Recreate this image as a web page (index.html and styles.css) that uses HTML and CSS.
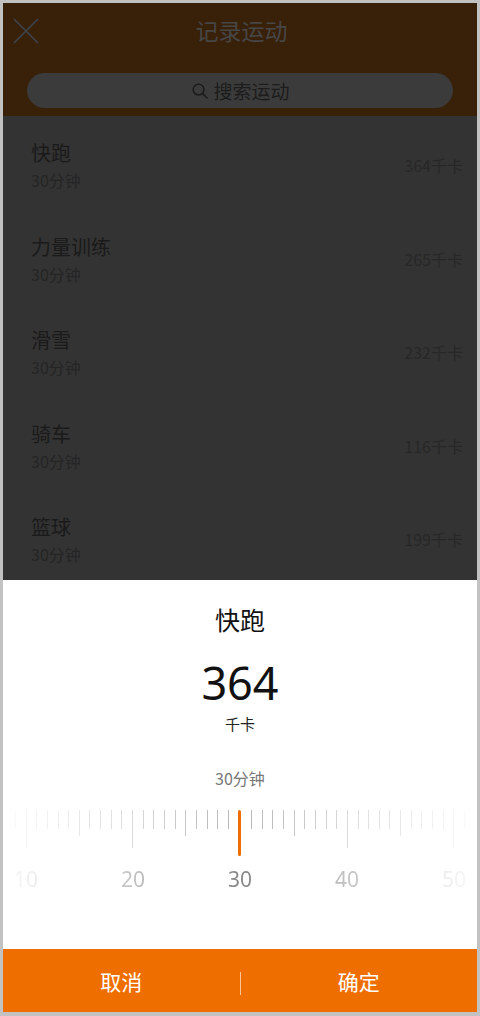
FILE: index.html
```html
<!DOCTYPE html>
<html lang="zh-CN">
<head>
    <meta charset="UTF-8">
    <meta name="viewport" content="width=device-width, initial-scale=1.0">
    <title>记录运动</title>
    <link rel="stylesheet" href="styles.css">
</head>
<body>
    <div class="app">
        <!-- Header (dimmed behind the sheet) -->
        <div class="top-bar">
            <div class="title-row">
                <svg class="close-icon" width="26" height="26" viewBox="0 0 26 26">
                    <path d="M1 1 L25 25 M25 1 L1 25" stroke="#3c444d" stroke-width="1.6" fill="none"/>
                </svg>
                <h1 class="page-title">记录运动</h1>
            </div>
            <div class="search-box">
                <svg class="search-icon" width="16" height="16" viewBox="0 0 16 16">
                    <circle cx="6.6" cy="6.6" r="5.4" stroke="#1c1c1c" stroke-width="1.6" fill="none"/>
                    <path d="M10.6 10.6 L15 15" stroke="#1c1c1c" stroke-width="1.6" stroke-linecap="round"/>
                </svg>
                <span>搜索运动</span>
            </div>
        </div>

        <div class="sport-list">
            <div class="sport-row">
                <div class="sport-info">
                    <div class="sport-name">快跑</div>
                    <div class="sport-time">30分钟</div>
                </div>
                <div class="sport-kcal">364千卡</div>
            </div>
            <div class="sport-row">
                <div class="sport-info">
                    <div class="sport-name">力量训练</div>
                    <div class="sport-time">30分钟</div>
                </div>
                <div class="sport-kcal">265千卡</div>
            </div>
            <div class="sport-row">
                <div class="sport-info">
                    <div class="sport-name">滑雪</div>
                    <div class="sport-time">30分钟</div>
                </div>
                <div class="sport-kcal">232千卡</div>
            </div>
            <div class="sport-row">
                <div class="sport-info">
                    <div class="sport-name">骑车</div>
                    <div class="sport-time">30分钟</div>
                </div>
                <div class="sport-kcal">116千卡</div>
            </div>
            <div class="sport-row">
                <div class="sport-info">
                    <div class="sport-name">篮球</div>
                    <div class="sport-time">30分钟</div>
                </div>
                <div class="sport-kcal">199千卡</div>
            </div>
        </div>

        <!-- Bottom sheet -->
        <div class="sheet">
            <div class="sheet-title">快跑</div>
            <div class="sheet-value">364</div>
            <div class="sheet-unit">千卡</div>
            <div class="sheet-duration">30分钟</div>

            <div class="ruler">
                <div class="ticks">
                    <span class="tick"></span>
                    <span class="tick long"></span>
                    <span class="tick"></span>
                    <span class="tick"></span>
                    <span class="tick"></span>
                    <span class="tick"></span>
                    <span class="tick mid"></span>
                    <span class="tick"></span>
                    <span class="tick"></span>
                    <span class="tick"></span>
                    <span class="tick"></span>
                    <span class="tick long"></span>
                    <span class="tick"></span>
                    <span class="tick"></span>
                    <span class="tick"></span>
                    <span class="tick"></span>
                    <span class="tick mid"></span>
                    <span class="tick"></span>
                    <span class="tick"></span>
                    <span class="tick"></span>
                    <span class="tick"></span>
                    <span class="tick current"></span>
                    <span class="tick"></span>
                    <span class="tick"></span>
                    <span class="tick"></span>
                    <span class="tick"></span>
                    <span class="tick mid"></span>
                    <span class="tick"></span>
                    <span class="tick"></span>
                    <span class="tick"></span>
                    <span class="tick"></span>
                    <span class="tick long"></span>
                    <span class="tick"></span>
                    <span class="tick"></span>
                    <span class="tick"></span>
                    <span class="tick"></span>
                    <span class="tick mid"></span>
                    <span class="tick"></span>
                    <span class="tick"></span>
                    <span class="tick"></span>
                    <span class="tick"></span>
                    <span class="tick long"></span>
                    <span class="tick"></span>
                </div>
                <div class="ruler-labels">
                    <span class="ruler-label">10</span>
                    <span class="ruler-label">20</span>
                    <span class="ruler-label">30</span>
                    <span class="ruler-label">40</span>
                    <span class="ruler-label">50</span>
                </div>
            </div>
        </div>

        <div class="sheet-buttons">
            <button class="sheet-button">取消</button>
            <span class="button-divider"></span>
            <button class="sheet-button">确定</button>
        </div>
    </div>
</body>
</html>
```

FILE: styles.css
```css
/* Basic Reset */
* {
    margin: 0;
    padding: 0;
    box-sizing: border-box;
}

body {
    font-family: 'Noto Sans CJK SC', 'Noto Sans', sans-serif;
    background-color: #c2c2c2;
    padding: 3px;
    width: 480px;
    height: 1016px;
    overflow: hidden;
}

.app {
    width: 474px;
    height: 1009px;
    display: flex;
    flex-direction: column;
    background-color: #333333;
}

/* Header */
.top-bar {
    height: 113px;
    background-color: #392008;
    padding: 0 24px;
}

.title-row {
    height: 58px;
    display: flex;
    align-items: center;
    justify-content: center;
    position: relative;
    padding-bottom: 4px;
}

.close-icon {
    position: absolute;
    left: -14px;
    top: 15px;
}

.page-title {
    font-size: 23px;
    font-weight: 400;
    color: #464646;
    line-height: 30px;
    margin-left: 3px;
}

.search-box {
    margin-top: 12px;
    height: 35px;
    border-radius: 18px;
    background-color: #3b3b3b;
    display: flex;
    align-items: center;
    justify-content: center;
    gap: 5px;
    font-size: 19px;
    color: #1c1c1c;
    padding-left: 2px;
}

/* Sport list */
.sport-list {
    height: 464px;
    overflow: hidden;
    background-color: #333333;
}

.sport-row {
    height: 93.5px;
    display: flex;
    justify-content: space-between;
    align-items: flex-start;
    padding: 24px 14px 0 28px;
}

.sport-name {
    font-size: 20px;
    line-height: 26px;
    color: #1a1a1a;
}

.sport-time {
    font-size: 16px;
    line-height: 28px;
    color: #252525;
}

.sport-kcal {
    margin-top: 13px;
    font-size: 16px;
    line-height: 24px;
    color: #272727;
}

/* Bottom sheet */
.sheet {
    height: 369px;
    background-color: #ffffff;
    text-align: center;
    padding-top: 22px;
}

.sheet-title {
    font-size: 25px;
    line-height: 34px;
    color: #111111;
}

.sheet-value {
    margin-top: 21px;
    font-family: 'Noto Sans', sans-serif;
    font-size: 45px;
    line-height: 52px;
    color: #111111;
}

.sheet-unit {
    margin-top: 5px;
    font-size: 15px;
    line-height: 20px;
    color: #222222;
}

.sheet-duration {
    margin-top: 33px;
    font-size: 16px;
    line-height: 22px;
    color: #777777;
}

.ruler {
    margin-top: 21px;
    -webkit-mask-image: linear-gradient(90deg, rgba(0, 0, 0, 0.04) 0%, rgba(0, 0, 0, 0.45) 25%, #000 50%, rgba(0, 0, 0, 0.45) 75%, rgba(0, 0, 0, 0.04) 100%);
    mask-image: linear-gradient(90deg, rgba(0, 0, 0, 0.04) 0%, rgba(0, 0, 0, 0.45) 25%, #000 50%, rgba(0, 0, 0, 0.45) 75%, rgba(0, 0, 0, 0.04) 100%);
}

.ticks {
    width: 450px;
    margin-left: 12px;
    height: 46px;
    display: flex;
    justify-content: space-between;
    align-items: flex-start;
}

.tick {
    width: 1px;
    height: 19px;
    background-color: #b4b4b4;
}

.tick.mid {
    height: 26px;
}

.tick.long {
    height: 38px;
}

.tick.current {
    width: 3px;
    height: 46px;
    border-radius: 2px;
    background-color: #ef6c00;
}

.ruler-labels {
    width: 428px;
    margin-left: 23px;
    margin-top: 10px;
    display: flex;
    justify-content: space-between;
}

.ruler-label {
    width: 0;
    display: flex;
    justify-content: center;
    font-family: 'Noto Sans', sans-serif;
    font-size: 21px;
    line-height: 26px;
    color: #888888;
}

/* Buttons */
.sheet-buttons {
    height: 63px;
    background-color: #ef6e00;
    display: flex;
    align-items: center;
}

.sheet-button {
    flex: 1;
    height: 100%;
    border: none;
    background: none;
    font-family: 'Noto Sans CJK SC', sans-serif;
    font-size: 21px;
    color: #ffffff;
    padding-top: 1px;
}

.button-divider {
    width: 1px;
    height: 23px;
    margin-top: 6px;
    background-color: rgba(255, 255, 255, 0.6);
}
```
